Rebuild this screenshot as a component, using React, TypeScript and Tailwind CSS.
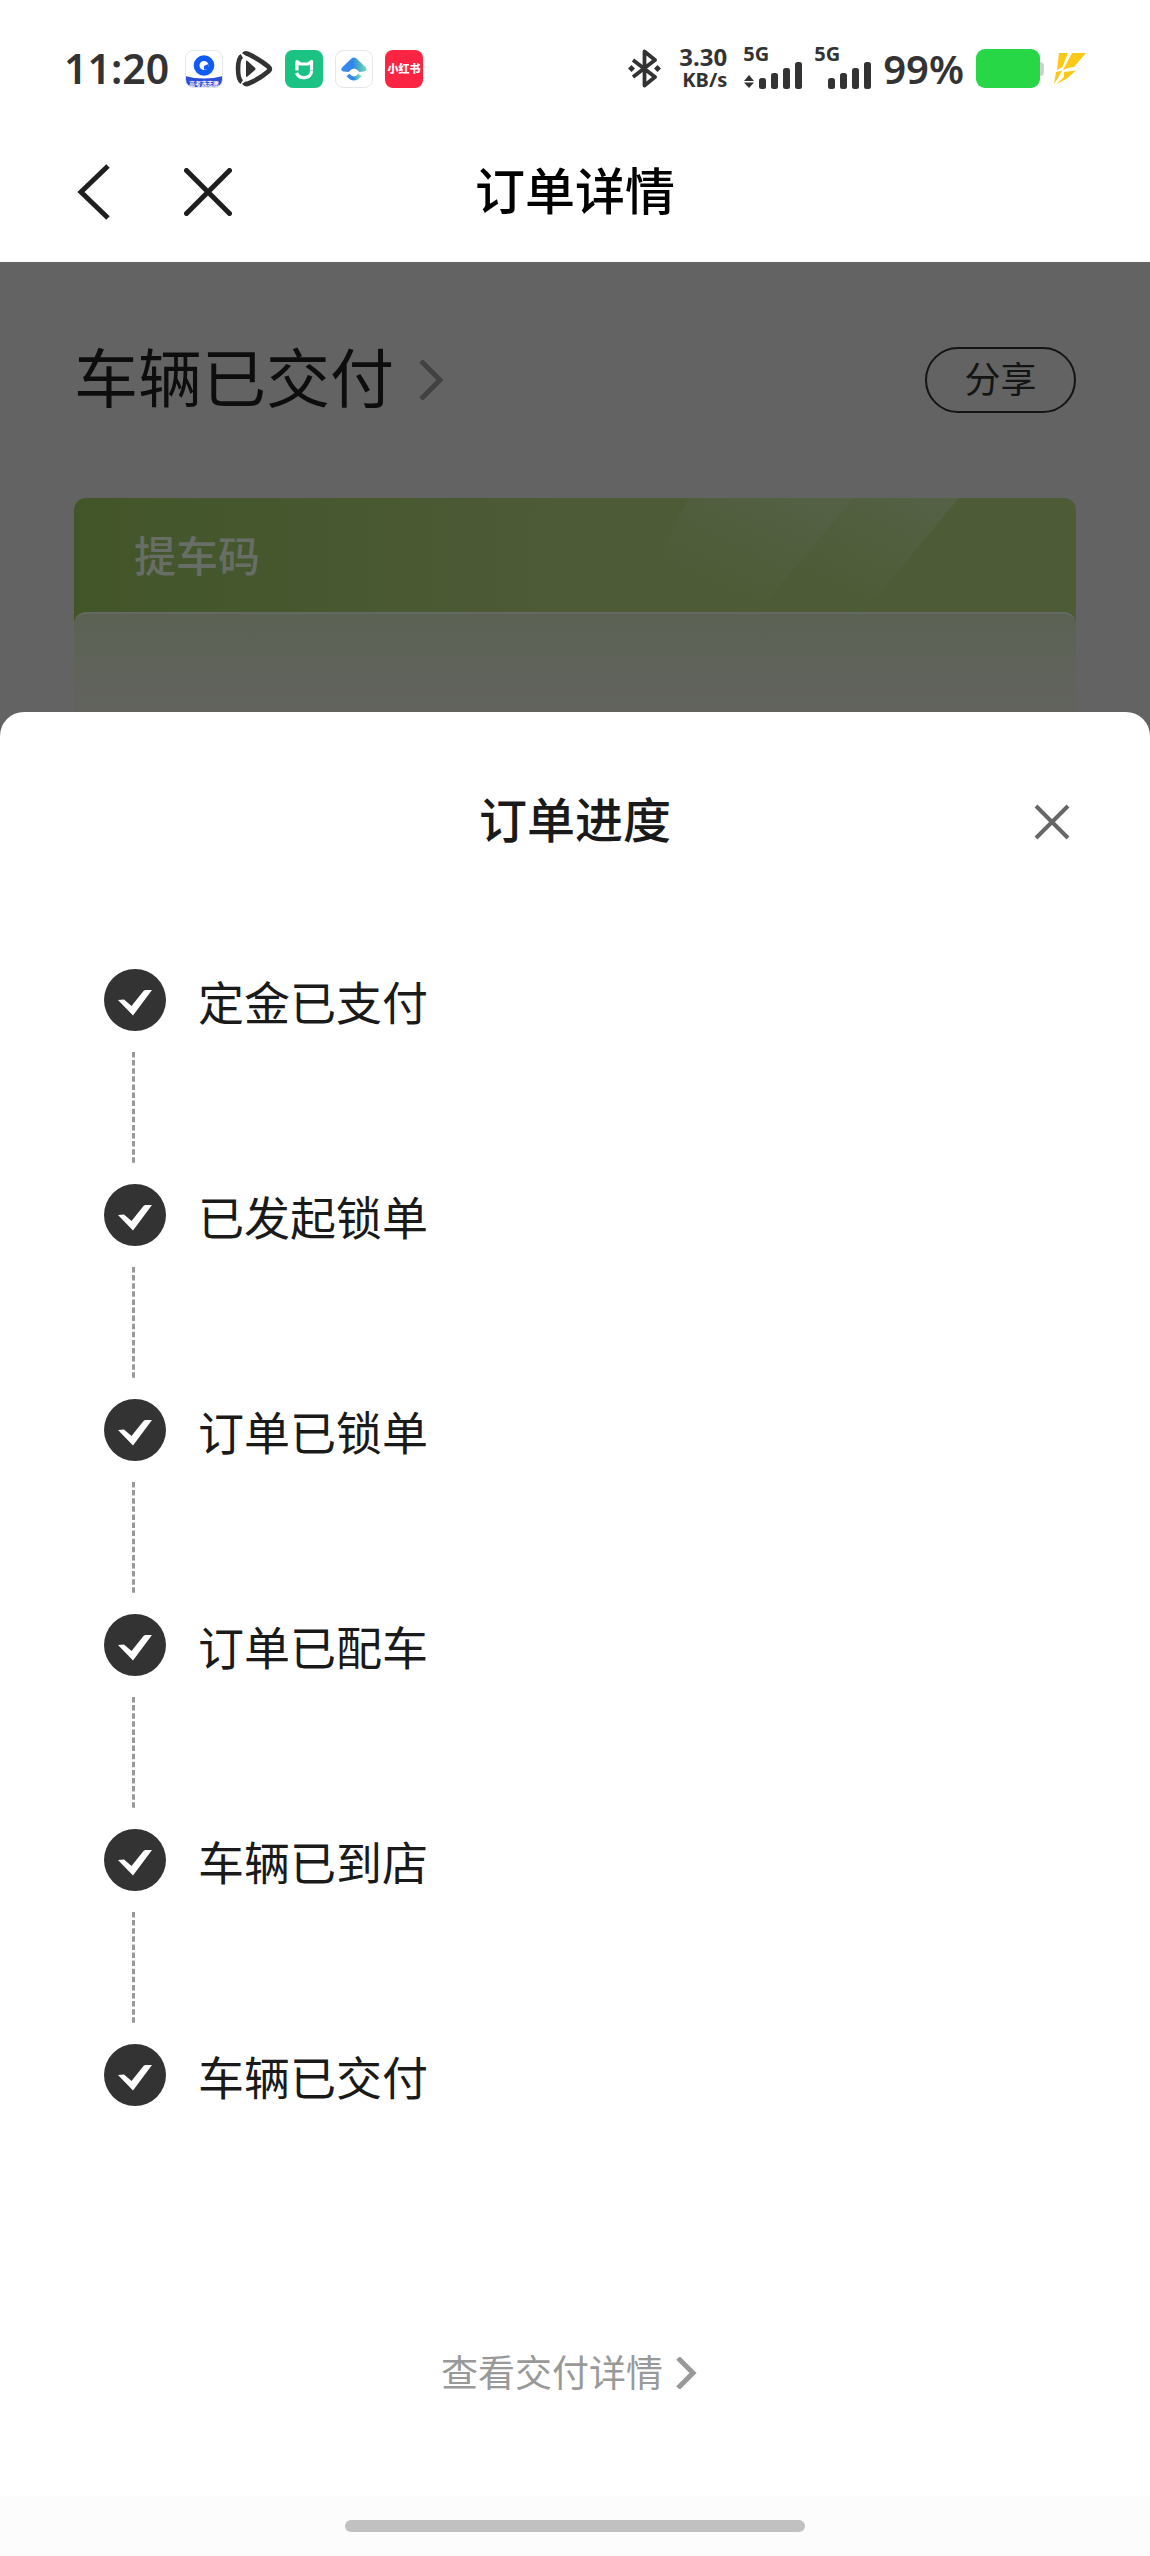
import React from "react";

const steps = ["定金已支付", "已发起锁单", "订单已锁单", "订单已配车", "车辆已到店", "车辆已交付"];

function SignalBars() {
  return (
    <svg width="43" height="28" viewBox="0 0 43 28" fill="#333333" aria-hidden="true">
      <rect x="0" y="17" width="7" height="11" rx="2.500" />
      <rect x="12" y="12" width="7" height="16" rx="2.500" />
      <rect x="24" y="7" width="7" height="21" rx="2.500" />
      <rect x="36" y="1" width="7" height="27" rx="2.500" />
    </svg>
  );
}

function SearchAppIcon() {
  return (
    <svg width="38" height="38" viewBox="0 0 38 38" aria-hidden="true">
      <defs>
        <clipPath id="searchTile">
          <rect x="0.5" y="0.5" width="37" height="37" rx="8" />
        </clipPath>
      </defs>
      <rect x="0.5" y="0.5" width="37" height="37" rx="8" fill="#ffffff" />
      <g clipPath="url(#searchTile)">
        <path d="M0 26 Q19 31 38 26 V38 H0 Z" fill="#2c4fd8" />
      </g>
      <rect x="0.5" y="0.5" width="37" height="37" rx="8" fill="none" stroke="#e3e6ec" />
      <circle cx="19" cy="15.5" r="7.4" fill="none" stroke="#0f5cf5" strokeWidth="5.800" />
      <path d="M19 19.500 V16 L23.500 14 V19.500 Z" fill="#0f5cf5" />
      <text x="19" y="36" textAnchor="middle" fontSize="6" fontWeight="700" fill="#ffffff">
        高考选志愿
      </text>
    </svg>
  );
}

function PlayAppIcon() {
  return (
    <svg width="38" height="38" viewBox="0 0 38 38" aria-hidden="true">
      <path
        d="M9 4.500 C10 3 12.500 3.500 15 4.800 C22 8.500 28 12 33.500 16.800 C35.300 18.300 35.300 19.700 33.500 21.200 C28 26 21 30.500 13.500 33.500 C11.500 34.300 10 34 9 32.500"
        fill="none"
        stroke="#333333"
        strokeWidth="4.800"
      />
      <path d="M6.800 6 C1.800 9 1.800 29 6.800 32" fill="none" stroke="#333333" strokeWidth="4.600" />
      <path d="M11 11.500 Q11 10 12.500 11 L20 17.800 Q21 19 20 20 L12.500 26.500 Q11 27.500 11 26 Z" fill="#333333" />
    </svg>
  );
}

function HomeAppIcon() {
  return (
    <svg width="38" height="38" viewBox="0 0 38 38" aria-hidden="true">
      <rect width="38" height="38" rx="8" fill="#1bc383" />
      <path
        d="M12 20.500 V11.500 L15.500 14 H23 L26.500 11.500 V20.500"
        fill="none"
        stroke="#ffffff"
        strokeWidth="3.200"
        strokeLinejoin="round"
      />
      <path d="M11.500 23 A8 8 0 0 0 26.700 21" fill="none" stroke="#ffffff" strokeWidth="3.200" />
    </svg>
  );
}

function RoofAppIcon() {
  return (
    <svg width="38" height="38" viewBox="0 0 38 38" aria-hidden="true">
      <defs>
        <linearGradient id="roof" x1="0" y1="0" x2="1" y2="0">
          <stop offset="0" stopColor="#3c8cf0" />
          <stop offset="0.450" stopColor="#2f86e8" />
          <stop offset="1" stopColor="#6fe0b0" />
        </linearGradient>
      </defs>
      <rect x="0.5" y="0.5" width="37" height="37" rx="8" fill="#ffffff" stroke="#e6e6e6" />
      <path
        d="M16.500 8.500 Q19 6.500 21.500 8.500 L31 17.500 Q32.500 21 29 21.500 L24.500 22 Q19 15 13.500 22 L8.500 21.500 Q5 20.500 7 17.500 Z"
        fill="url(#roof)"
      />
      <path d="M13 25 Q19 32 25 25" fill="none" stroke="url(#roof)" strokeWidth="4" />
    </svg>
  );
}

function RedAppIcon() {
  return (
    <svg width="38" height="38" viewBox="0 0 38 38" aria-hidden="true">
      <rect width="38" height="38" rx="8" fill="#fb2442" />
      <text x="19" y="23" textAnchor="middle" fontSize="11" fontWeight="900" fill="#ffffff">
        小红书
      </text>
    </svg>
  );
}

function BluetoothIcon() {
  return (
    <svg width="33" height="39" viewBox="0 0 33 39" fill="none" stroke="#333333" strokeWidth="3.800" aria-hidden="true">
      <path d="M5 11 L27 28 L16.500 36.500 V2.500 L27 11 L5 28" strokeLinejoin="round" />
      <path d="M3.500 16 L7 19.500 L3.500 23 L0 19.500 Z M29.500 16 L33 19.500 L29.500 23 L26 19.500 Z" fill="#333333" stroke="none" />
    </svg>
  );
}

function StatusBar() {
  return (
    <div className="flex h-[130px] items-center justify-between px-16 pt-[7px] text-[#333333]">
      <div className="flex items-center">
        <span className="w-[121px] text-[41px] font-semibold leading-none">11:20</span>
        <div className="flex items-center gap-3">
          <SearchAppIcon />
          <PlayAppIcon />
          <HomeAppIcon />
          <RoofAppIcon />
          <RedAppIcon />
        </div>
      </div>
      <div className="flex items-center">
        <BluetoothIcon />
        <div className="ml-4 flex w-[50px] flex-col items-end font-bold">
          <span className="text-2xl leading-[22px]">3.30</span>
          <span className="text-xl leading-[24px]">KB/s</span>
        </div>
        <div className="ml-4 flex flex-col pb-0.5">
          <span className="text-xl font-bold leading-[14px]">5G</span>
          <div className="flex items-end gap-1">
            <svg width="12" height="14" viewBox="0 0 12 14" fill="#333333" aria-hidden="true">
              <path d="M6 0 L11 6 H1 Z M6 13 L1 7.500 H11 Z" />
            </svg>
            <SignalBars />
          </div>
        </div>
        <div className="ml-3 flex flex-col pb-0.5">
          <span className="text-xl font-bold leading-[14px]">5G</span>
          <div className="pl-[14px]">
            <SignalBars />
          </div>
        </div>
        <span className="ml-3 text-[40px] font-semibold leading-none">99%</span>
        <div className="ml-3 flex items-center">
          <div className="h-[39px] w-16 rounded-[9px] bg-[#28d745]" />
          <div className="h-3.5 w-1 rounded-r bg-[#cfcfcf]" />
        </div>
        <svg className="ml-2.5" width="32" height="32" viewBox="0 0 32 32" fill="#fbc917" aria-hidden="true">
          <path d="M5 0 H14 L8.500 14 L3 17 Z" />
          <path d="M18 0 H32 L20 14 L14 15 L9 17 Z" />
          <path d="M2 19 L8 17.500 L4 25 L0 31 Z" />
          <path d="M10 19 L22 17.500 L13 25.500 L2 31.500 L10 24 Z" />
        </svg>
      </div>
    </div>
  );
}

function StepRow({ label, last }: { label: string; last: boolean }) {
  return (
    <li className={last ? "flex h-[62px] items-start" : "flex h-[215px] items-start"}>
      <div className="flex w-[62px] flex-col items-center">
        <svg width="62" height="62" viewBox="0 0 62 62" aria-hidden="true">
          <circle cx="31" cy="31" r="31" fill="#333333" />
          <path d="M14 31 L20 30.500 L27.500 37 L39.500 22 Q40.500 21 42 21 H48 L29 46.500 Z" fill="#ffffff" />
        </svg>
        {!last && (
          <svg className="mr-1 mt-[21px]" width="3" height="111" viewBox="0 0 3 111" aria-hidden="true">
            <path d="M1.500 0 V111" stroke="#999999" strokeWidth="3" strokeDasharray="5.500 2.600" />
          </svg>
        )}
      </div>
      <span className="ml-8 pt-0.5 text-[46px] leading-[62px] text-[#1a1a1a]">{label}</span>
    </li>
  );
}

export default function App() {
  return (
    <div className="flex min-h-screen flex-col bg-[#636363] font-['Noto_Sans','Noto_Sans_CJK_SC',sans-serif]">
      <header className="bg-white">
        <StatusBar />
        <div className="grid h-[132px] grid-cols-3 items-center px-[74px] pb-2">
          <div className="flex items-center">
            <button type="button" aria-label="返回" className="w-[110px]">
              <svg width="38" height="56" viewBox="0 0 38 56" fill="none" stroke="#1f1f1f" strokeWidth="5" aria-hidden="true">
                <path d="M34 2 L7 28 L34 54" />
              </svg>
            </button>
            <button type="button" aria-label="关闭">
              <svg width="48" height="48" viewBox="0 0 48 48" fill="none" stroke="#1f1f1f" strokeWidth="5" strokeLinecap="round" aria-hidden="true">
                <path d="M2.500 2.500 L45.500 45.500 M45.500 2.500 L2.500 45.500" />
              </svg>
            </button>
          </div>
          <h1 className="whitespace-nowrap pb-0.5 text-center text-[50px] font-medium leading-none text-black">订单详情</h1>
        </div>
      </header>

      <main className="flex h-[450px] flex-col px-[74px]">
        <div className="flex h-[236px] items-center justify-between">
          <button type="button" className="flex items-center gap-6 text-[64px] leading-none text-[#0d0d0d]">
            <span className="pb-1">车辆已交付</span>
            <svg width="26" height="40" viewBox="0 0 26 40" fill="none" stroke="#424242" strokeWidth="5" aria-hidden="true">
              <path d="M3 1 L22 20 L3 39" />
            </svg>
          </button>
          <button type="button" className="h-[66px] w-[151px] rounded-full border-2 border-[#141414] text-4xl leading-none text-[#141414]">
            分享
          </button>
        </div>
        <section className="relative flex grow flex-col overflow-hidden rounded-t-xl bg-linear-to-r from-[#425528] via-[#4d5b37] via-50% to-[#4d5c36]">
          <svg className="absolute right-[117px] top-0" width="330" height="114" viewBox="0 0 330 114" aria-hidden="true">
            <defs>
              <linearGradient id="beam" x1="1" y1="0" x2="0.250" y2="0.800">
                <stop offset="0" stopColor="#58644d" stopOpacity="0.700" />
                <stop offset="1" stopColor="#55634a" stopOpacity="0" />
              </linearGradient>
            </defs>
            <path d="M60 0 H225 L128 114 H0 Z" fill="url(#beam)" />
            <path d="M225 0 H330 L235 114 H128 Z" fill="url(#beam)" />
          </svg>
          <h2 className="flex h-[114px] items-center pl-[60px] pt-0.5 text-[42px] font-medium leading-none text-[#686d66]">提车码</h2>
          <div className="grow rounded-t-xl border-t-2 border-[#646962] bg-linear-to-b from-[#5b6253] to-[#62635e]" />
        </section>
      </main>

      <section role="dialog" aria-labelledby="progress-title" className="flex grow flex-col bg-[#636363]">
        <div className="flex grow flex-col rounded-t-3xl bg-white">
          <div className="grid h-[220px] grid-cols-3 items-center px-20">
            <span />
            <h2 id="progress-title" className="whitespace-nowrap pb-1 text-center text-5xl font-medium leading-none text-[#1a1a1a]">
              订单进度
            </h2>
            <button type="button" aria-label="关闭进度" className="justify-self-end">
              <svg width="36" height="36" viewBox="0 0 36 36" fill="none" stroke="#666666" strokeWidth="4" aria-hidden="true">
                <path d="M2 2 L34 34 M34 2 L2 34" />
              </svg>
            </button>
          </div>
          <ol className="mt-[37px] px-[104px]">
            {steps.map((label, i) => (
              <StepRow key={label} label={label} last={i === steps.length - 1} />
            ))}
          </ol>
          <a href="#delivery" className="mt-60 flex items-center justify-center gap-3 pr-3 text-[37px] leading-[54px] text-[#999999]">
            <span>查看交付详情</span>
            <svg width="22" height="32" viewBox="0 0 22 32" fill="none" stroke="#999999" strokeWidth="5" aria-hidden="true">
              <path d="M3 1 L18 16 L3 31" />
            </svg>
          </a>
          <footer className="mt-auto flex h-[60px] items-center justify-center bg-[#fcfcfc]">
            <div className="h-3 w-2/5 rounded-full bg-[#c1c1c1]" />
          </footer>
        </div>
      </section>
    </div>
  );
}
